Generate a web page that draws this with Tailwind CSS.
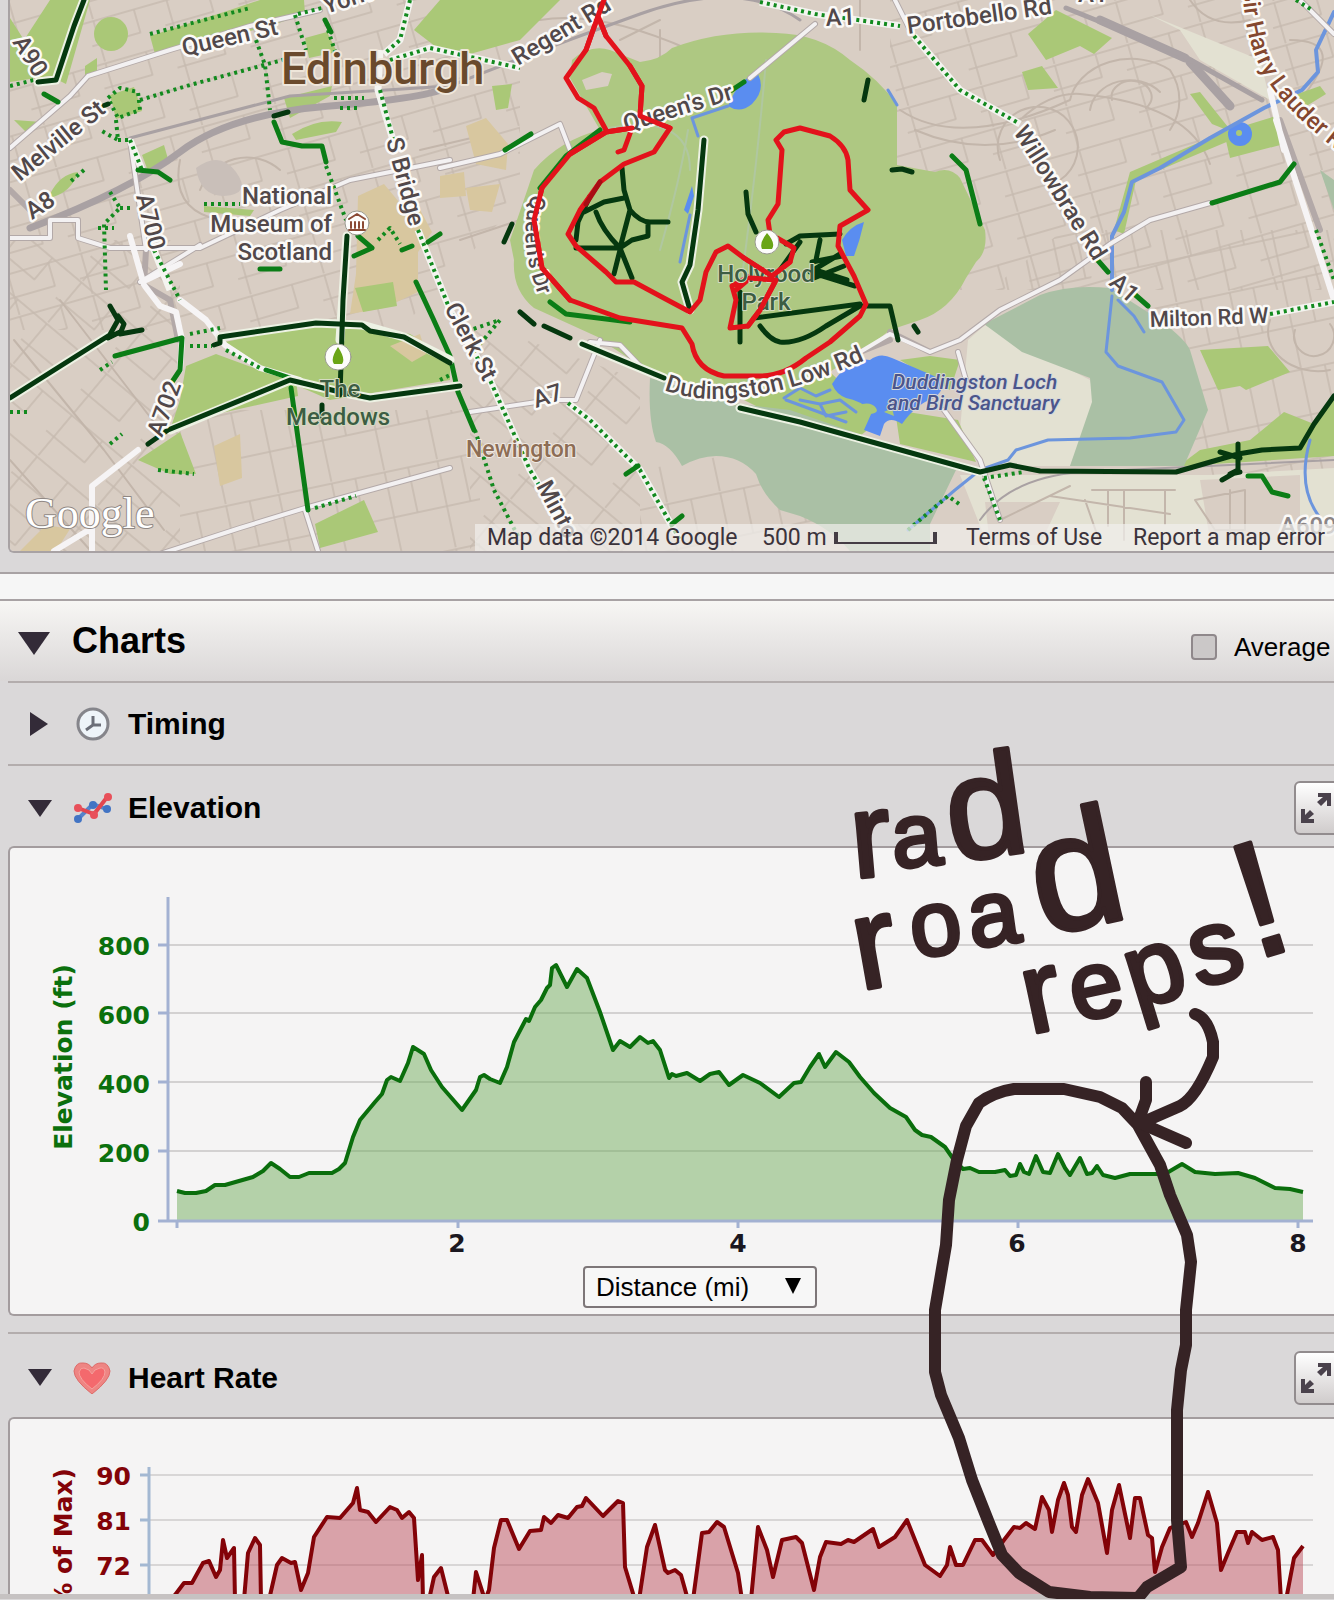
<!DOCTYPE html>
<html lang="en">
<head>
    <meta charset="UTF-8">
    <meta name="viewport" content="width=device-width, initial-scale=1.0">
    <title>Activity - Map and Charts</title>
    <script src="https://cdn.jsdelivr.net/npm/@tailwindcss/browser@4"></script>
</head>
<body class="bg-[#dad8d9] font-['Liberation_Sans',Arial,sans-serif] text-black">
<div class="relative overflow-hidden">

    <!-- Map -->
    <section class="border-b-2 border-[#a8a2a4] pl-2 pb-[19px]">
        <div class="relative overflow-hidden rounded-bl-md border-l-2 border-b-2 border-[#a8a2a4]">
            <svg class="block h-[551px] w-full bg-[#d9cec4]" viewBox="10 0 1324 551" preserveAspectRatio="xMinYMin slice" font-family="Roboto, sans-serif" font-weight="500" fill="none" stroke-linecap="round" stroke-linejoin="round">
                <defs>
                    <pattern id="streetsA" width="76" height="44" patternUnits="userSpaceOnUse" patternTransform="rotate(-16)">
                        <path d="M0 2H76M0 26H50M8 2V46M50 2V26" stroke="#c6baaf" stroke-width="1.5"/>
                    </pattern>
                    <pattern id="streetsB" width="78" height="54" patternUnits="userSpaceOnUse" patternTransform="rotate(40)">
                        <path d="M0 2H78M0 30H50M10 2V56M50 2V30" stroke="#c6baaf" stroke-width="1.5"/>
                    </pattern>
                    <pattern id="streetsC" width="54" height="90" patternUnits="userSpaceOnUse" patternTransform="rotate(-12)">
                        <path d="M0 2H54M8 2V92M32 2V48M0 48H54" stroke="#c6baaf" stroke-width="1.5"/>
                    </pattern>
                    <path id="queensWest" d="M532 194C520 230 524 264 548 320"/>
                    <path id="dudingston" d="M664 390C720 412 800 390 870 358"/>
                    <path id="lauder" d="M1242 -12C1248 60 1262 95 1350 160"/>
                </defs>

                <!-- minor streets -->
                <path fill="url(#streetsA)" d="M10 0H520V200L400 330H10ZM890 0H1334V290H960L890 160Z"/>
                <path fill="url(#streetsB)" d="M10 240H180V551H10ZM470 320 640 380 640 551H470Z"/>
                <path fill="url(#streetsC)" d="M180 410H480V551H180ZM1090 230H1334V500H1200ZM640 470 760 450 840 551H640ZM990 290 1100 200 1090 290Z"/>
                <path stroke="#c3b6ab" stroke-width="2" d="M1070 100a62 50 0 0 1 100 -30a70 60 0 0 1 0 60M1090 110a40 34 0 0 1 70 -18M1112 100a20 16 0 1 1 34 8M1020 120q30 -28 60 -26q110 10 130 70M900 110q60 40 170 -10M915 130q70 30 140 0M1000 160a40 40 0 1 1 60 20M540 20q60 -10 150 30q60 30 100 0M620 40l40 -20M660 30v70M860 0v50M1270 320a50 40 0 0 0 60 50M1295 330a20 20 0 1 0 35 -6M1190 0q20 30 60 20M1290 40q60 0 10 60M200 190a50 50 0 0 1 80 -20M180 160q-10 50 40 60M14 340l90 110 60 80M60 300l100 130M10 460l80 90M420 150l60 -14M460 240l60 -20"/>

                <!-- open country -->
                <path fill="#e3e1d2" d="M968 340 985 325 1090 380 1096 400 1070 466H985L960 430ZM960 475H1210L1334 468V551H990ZM1150 15 1260 60 1270 100 1200 60 1180 30Z"/>
                <path fill="#d9cec4" d="M985 502H1060L1040 545H990ZM1200 480 1300 475V540H1210Z"/>
                <path stroke="#c3b6ab" stroke-width="2" d="M1092 490H1175M1108 490v36M1124 490v50M1165 490v34M1050 496l120 18M1000 520l70 -34M1195 500l50 -10v40h-30ZM1230 490v50M1085 500l14 40"/>

                <!-- parks -->
                <g fill="#aac877">
                    <path d="M10 18 24 40 50 0H90L66 84 50 76 10 82Z"/>
                    <circle cx="111" cy="34" r="17"/>
                    <path d="M150 36 230 10 260 0H304L305 14 270 26 155 54ZM85 66l12 -8v14l-12 4ZM14 120l28 2 -14 12ZM305 38l22 -6 10 20 -28 6ZM110 95l24 -8 8 24 -26 8ZM284 98 332 86 330 96 290 118ZM292 134q24 -16 50 -12l-6 10 -40 8ZM50 194q10 -20 28 -22q-6 20 -28 26ZM142 155l22 -10 4 14 -20 12ZM204 206l50 4 -4 6 -46 -4Z"/>
                    <path d="M225 342 330 320 410 334 450 358V380L330 400 280 378ZM186 366 216 354 270 374 296 380 298 396 172 424 180 400ZM138 460 180 432 196 474 170 474ZM315 524 364 500 378 532 320 548Z"/>
                    <path d="M460 0H560L520 40 470 54 440 50ZM414 30 440 0H460L440 50ZM492 86l20 -2 -4 24 -12 2Z"/>
                    <path fill="#aec882" d="M572 60Q590 44 610 50L640 62Q660 60 672 48Q720 30 776 33Q820 34 850 60Q880 80 897 105V165L935 172Q950 166 960 178L985 230Q988 252 976 262L966 278Q950 310 920 320L890 330 862 352 800 390 720 400 650 372 610 346 600 338 534 308Q512 290 514 260L510 240Q524 200 534 170Q560 140 600 130L570 78Z"/>
                    <path d="M1028 34 1056 10 1112 38 1094 54 1080 46 1046 60ZM1022 72l20 -6 16 22 -30 2ZM1190 94l10 -2 32 40 -20 -8ZM1224 132 1276 116 1284 144 1230 158ZM1286 98 1320 86 1326 94 1300 110ZM1130 172 1228 130 1236 138 1136 180 1124 234 1114 230Z"/>
                    <path d="M1200 350 1268 346 1290 372 1246 390 1240 386 1218 390ZM1184 462 1200 450 1250 440 1284 412 1314 424 1334 400V456L1184 466ZM895 410 958 420 976 462 900 444ZM960 360 930 356 900 360 950 390ZM740 398 830 372 880 420 860 436 760 408Z"/>
                </g>
                <path fill="#d9cec4" d="M582 80l20 -8 10 2 -4 12 -22 4Z"/>
                <path fill="#d8c79f" d="M466 126l20 -8 22 26 -2 26 -30 -6ZM440 176l24 -4 2 24 -26 2ZM466 188l34 -4 -8 28 -22 -2ZM358 196l26 -12 20 24 14 -2 14 26 -14 20v40l-34 16 -34 6 6 -40ZM214 446l26 -12 2 44 -22 8ZM20 551l26 -26 24 4 -14 22ZM390 346l30 -12 6 20 -14 8Z"/>
                <path fill="#aac877" d="M355 288l38 -6 4 24 -34 6Z"/>

                <!-- golf courses -->
                <path fill="#aac0a5" d="M650 378 740 404 790 410 888 444 956 470 930 524V551H850Q830 528 800 516L780 510Q762 494 756 474Q740 456 716 456Q700 456 682 466Q670 444 656 442Q648 420 650 378ZM984 324 1040 295Q1070 284 1110 288L1160 320Q1186 340 1190 350L1208 410 1184 466H1070L1092 402 1090 378 1022 352ZM1320 170 1334 180V210Z"/>
                <path stroke="#b0c7a0" stroke-width="2" d="M660 250q20 -70 28 -120M766 60q-10 120 -30 260M600 130q90 -20 90 40"/>

                <!-- railways -->
                <g stroke="#a9a1a3">
                    <path stroke-width="7" d="M30 228Q130 190 180 152T330 106T450 86"/>
                    <path stroke-width="3" d="M130 138 290 96 450 86Q540 50 640 14T800 20"/>
                    <path stroke-width="9" d="M1100 20 1185 58M1190 62 1230 106"/>
                    <path stroke-width="5" d="M1066 8 1180 54 1262 100"/>
                    <path stroke-width="2" d="M980 520Q1010 478 1080 472L1334 460"/>
                </g>
                <path fill="#c9bfb9" d="M196 168q24 -18 40 4t-12 24q-24 0 -28 -28Z"/>

                <!-- water -->
                <g fill="#5a8df0">
                    <path d="M728 106Q740 76 758 74Q766 90 752 104Q740 114 728 106ZM842 240Q850 226 864 222Q860 240 854 256L846 256ZM684 210 692 186 694 196 688 214Z"/>
                    <path d="M832 384Q850 356 870 360Q880 352 892 358L934 376Q950 386 934 398Q916 404 902 424Q890 416 884 424L880 436 864 430 872 412Q860 400 846 398Q836 394 832 384Z"/>
                    <circle cx="1240" cy="134" r="12"/>
                </g>
                <path fill="#aac877" d="M862 404q10 -2 14 4t-10 6ZM884 412l8 -4 2 8Z"/>
                <g stroke="#6c95dd">
                    <path stroke-width="4" d="M1334 12 1316 50 1318 72 1302 90 1264 108 1210 138 1160 168 1132 182 1124 212 1112 236V290"/>
                    <path stroke-width="3" d="M1112 296 1106 352 1118 366 1162 382 1184 420 1176 432 1130 438 1048 440 1016 450 1008 460 980 470 955 490 908 530M1144 332 1134 316 1118 300M786 400l60 22M690 215 680 262M698 136 692 118 728 106M1310 440Q1296 490 1322 520M888 90 897 105"/>
                    <path stroke-width="3" d="M784 398 800 388 816 396 830 390M800 400 820 404 840 400 856 412M820 404 826 416 846 412"/>
                </g>
                <circle cx="1239" cy="133" r="3" fill="#aac877"/>

                <!-- main roads -->
                <path stroke="#b3a9a8" stroke-width="6" d="M70 96 88 76 170 50 250 26 320 10M70 96 10 148M130 140 146 250 144 285 170 300 178 340M10 238H50V220H78V238L110 248H200L280 210 350 180 450 160M140 282 200 245M440 168 500 154 560 124 570 150M815 24 750 78M890 332 930 352 960 340 1000 310 1060 280 1110 244 1150 220 1210 203M895 0 910 30M958 352 966 380M944 410 980 460 1000 520M1300 0 1334 34M1280 120 1320 230M600 340 576 400 550 400 470 412M640 366 620 345 590 342M860 352 890 340M10 190 30 210M160 554 240 528 305 508 450 468M305 510 318 551"/>
                <path stroke="#f3f1f2" stroke-width="4" d="M70 96 88 76 170 50 250 26 320 10M70 96 10 148M130 140 146 250M10 238H50V220H78V238L110 248H200L280 210 350 180 450 160M140 282 200 245M440 168 500 154 560 124 570 150M815 24 750 78M860 352 890 334 930 352 960 340 1000 310 1060 280 1110 244 1150 220 1210 203M895 0 910 30M958 352 966 380M944 410 980 460 1000 520M1300 0 1334 34M600 340 576 400 550 400 470 412M640 366 620 345 590 342M160 554 240 528 305 508 450 468M305 510 318 551"/>
                <path stroke="#f6f4f5" stroke-width="6" d="M130 236 144 285 160 306 176 312 182 340 180 370M146 280 180 264M180 300 206 320 225 345 260 368 300 380M138 450 92 486V551M92 528 54 551M1276 120 1334 300M1270 90 1284 150"/>

                <!-- activity heat traces, dotted -->
                <path stroke="#f4f4f0" stroke-width="7" stroke-linecap="butt" d="M380 50 378 90 396 150M410 0 400 40 384 54M390 60 430 48 520 68M418 230 450 310 490 380 530 470 560 520M568 403 590 420 640 470 680 540M760 2 815 14 900 26M914 36 960 90 1020 124M1270 314 1334 302M130 140 142 170M154 250 170 290"/>
                <g stroke="#128a1e" stroke-width="4" stroke-linecap="butt" stroke-dasharray="3 4">
                    <path d="M380 90 396 150M410 0 400 40 384 54M390 60 430 48 520 68M418 230 450 310 490 380 530 470 560 520M568 403 590 420 640 470 680 540M760 2 815 14 900 26M914 36 960 90 1020 124M1270 314 1334 302M130 140 142 170M154 250 180 300"/>
                    <path d="M150 34 250 8M256 40 265 65 270 110M295 15 306 50M298 14 322 8M328 30 336 54M140 100 190 85 290 58M108 98 120 88 138 92 140 110 118 118ZM116 120 118 140 100 130M118 140H132M326 166 346 220M110 192 120 208 104 224 106 290M120 208H132M98 228h16M204 204H240M10 86 34 80M334 98h30M340 108h20M378 240l12 -12 10 16M475 430 494 490 520 540M480 344 500 320 470 330M158 470 194 474M315 508 356 496M190 334 220 328M190 346h22M100 370l12 -8M110 444l12 -10M10 412h20M84 170l-14 12M984 478 1000 520M984 478l40 -6M908 530l40 -34 14 10M226 350 260 368M440 380l12 -6M1316 230 1334 280M1296 0l16 10"/>
                </g>

                <!-- activity heat traces, solid -->
                <path stroke="#0b7d16" stroke-width="5" d="M44 94l14 8M274 122l8 20 20 4 20 0 4 16M138 170l20 2 12 8M260 269h20M358 236l14 12 -18 8M115 356 182 338 180 370 172 382M266 370 290 378M291 388 308 510M416 282Q434 320 450 356L458 392 474 430M402 250l10 -4M428 242l12 -8M505 150l26 -16M540 188 566 156 600 130M550 302 566 314 630 322M626 474l12 -8M672 524l10 -8M732 90l12 -8M325 20l6 12M952 156 966 170 980 224M1094 256l14 16M1132 292l16 14M1212 203 1280 182 1294 164M1248 476l14 0 10 16 16 4"/>
                <path stroke="#edf2e4" stroke-width="9" d="M84 0 74 26 56 80 38 82M10 398 108 336M220 337 316 323 362 325 404 337 450 360M170 430 290 380 340 392 370 398 458 386M347 236 340 340M582 344 664 378M740 408 800 422 980 472M704 140 698 210 690 265 682 282 690 310"/>
                <g stroke="#05380f" stroke-width="5">
                    <path d="M84 0 74 26 56 80 38 82M98 108l10 -4M274 116l14 -4M347 236 343 300 340 395M10 398 108 336M110 306 118 320 108 338M118 316l6 8 -4 10 22 -4M120 332l-12 6"/>
                    <path d="M214 345l6 -2 0 -6 96 -14 46 2 8 6 34 6 46 26M148 444 168 430 290 380 340 392 370 398 460 386M322 405v14"/>
                    <path d="M504 242l8 -18M520 312l14 12M544 326l26 12M582 344 664 378M740 408 800 422 980 472 1010 465 1040 471 1176 472 1238 454 1262 450 1300 448 1314 424 1334 396M1238 444V470l-8 4 10 -2M1220 452l20 6M1222 480l14 -8"/>
                    <path d="M704 140 698 210 690 265 682 282 690 310M622 168 624 190 630 210Q640 222 650 222H668M584 212 604 202 624 198M596 212Q602 230 620 248M630 210 620 248M576 248H620L632 240 648 236 648 222M620 248 632 278M620 250 614 274M576 240 578 222 590 196M746 192 748 214 756 232M868 80l-4 20M892 170l10 -1 10 3"/>
                    <path d="M786 244 800 236 840 234M800 242 780 270M820 240l-4 20M840 254 810 272 855 286M815 270l32 10M812 262l30 -6M814 278l30 -12M740 292v50M760 326Q770 340 780 342Q800 344 826 326L860 306 890 306 898 340M754 318 860 304M914 326l4 6"/>
                </g>

                <!-- recorded route -->
                <path stroke="#e3121b" stroke-width="5" d="M604 0 598 16 606 36 630 66 642 86 640 116 670 128 654 152 624 164 600 182 580 210 568 234 576 246 606 272 616 282 634 282 660 296 690 312 700 300 706 272 716 252 728 246 744 258 772 276 790 262 794 248 784 242 770 234 768 220 778 204 782 150 776 140 784 132 800 128 830 136Q846 146 848 160L850 190 868 210 840 226 838 246 854 276 866 304 860 316 830 342 806 358Q784 376 760 376H724Q696 370 692 344L682 328 620 318 570 300 542 268 534 220 542 188 570 154 606 132 632 128 624 150 618 152M598 16 586 50 566 78 578 98 594 108 606 130M736 290 750 278 776 280 760 310 748 326 730 328 736 300 732 286 750 276"/>
                <path stroke="#a80d14" stroke-width="5" d="M600 182 586 204"/>

                <!-- pins -->
                <g fill="#fdfdfb" stroke="#9a9a90">
                    <circle cx="338" cy="357" r="13"/>
                    <circle cx="767" cy="242" r="12"/>
                    <circle cx="357" cy="223" r="12"/>
                </g>
                <path fill="#6aa516" d="M338 347q-8 12 -4 17h8q4 -5 -4 -17ZM767 233q-8 10 -5 16h10q4 -6 -5 -16Z"/>
                <path stroke="#8a4a35" stroke-width="2" d="M349 219l8 -5 8 5M351 222v6M355 222v6M359 222v6M363 222v6M349 230h16"/>

                <!-- labels -->
                <g font-size="24" fill="#51484a" stroke="#fbfaf8" stroke-width="5" paint-order="stroke">
                    <text transform="translate(184 56) rotate(-13)">Queen St</text>
                    <text transform="translate(326 14) rotate(-18)">York Pl</text>
                    <text transform="translate(12 42) rotate(58)">A90</text>
                    <text transform="translate(20 182) rotate(-39)">Melville St</text>
                    <text transform="translate(32 220) rotate(-33)">A8</text>
                    <text transform="translate(136 196) rotate(76)">A700</text>
                    <text transform="translate(386 140) rotate(75)">S Bridge</text>
                    <text transform="translate(518 66) rotate(-31)">Regent Rd</text>
                    <text transform="translate(826 26) rotate(-3)">A1</text>
                    <text transform="translate(908 34) rotate(-8)">Portobello Rd</text>
                    <text transform="translate(1078 2)">A1</text>
                    <text transform="translate(1013 132) rotate(58)">Willowbrae Rd</text>
                    <text transform="translate(1108 284) rotate(42)">A1</text>
                    <text transform="translate(1150 327) rotate(-2)" font-size="22">Milton Rd W</text>
                    <text transform="translate(162 438) rotate(-70)">A702</text>
                    <text transform="translate(444 308) rotate(62)">Clerk St</text>
                    <text transform="translate(536 408) rotate(-18)">A7</text>
                    <text transform="translate(536 486) rotate(62)">Minto</text>
                    <text transform="translate(626 132) rotate(-17)">Queen's Dr</text>
                    <text font-size="22"><textPath href="#queensWest">Queen's Dr</textPath></text>
                    <text><textPath href="#dudingston">Dudingston Low Rd</textPath></text>
                    <text x="1280" y="534" fill="#8b8587">A6095</text>
                    <text fill="#84472f"><textPath href="#lauder">Sir Harry Lauder Rd</textPath></text>
                    <g text-anchor="end">
                        <text x="332" y="204">National</text>
                        <text x="332" y="232">Museum of</text>
                        <text x="332" y="260">Scotland</text>
                    </g>
                </g>
                <path stroke="#e3121b" stroke-width="5" d="M604 0 598 16 606 36M598 16 586 50M630 66 642 86 640 116 670 128M542 188 534 220 542 268 570 300M570 154 606 132 632 128"/>
                <g font-size="24" stroke-width="2" paint-order="stroke">
                    <g fill="#3c5d43" stroke="#d5dcc0" text-anchor="middle">
                        <text x="340" y="397">The</text>
                        <text x="338" y="425">Meadows</text>
                        <text x="766" y="282">Holyrood</text>
                        <text x="766" y="310">Park</text>
                    </g>
                    <text x="466" y="457" font-size="23" fill="#8d6d55" stroke="#efe9e2">Newington</text>
                    <g font-size="21" font-style="italic" fill="#4b558b" stroke="#d5d8dc">
                        <text x="892" y="389">Duddingston Loch</text>
                        <text x="887" y="410">and Bird Sanctuary</text>
                    </g>
                    <text x="281" y="84" font-size="45" fill="#6a4a2c" stroke="#efe6da" stroke-width="4">Edinburgh</text>
                </g>
                <path stroke="#e3121b" stroke-width="5" d="M744 258 772 276 790 262M750 278 776 280 760 310 748 326"/>
                <text x="25" y="528" font-family="Liberation Serif, serif" font-size="44" font-weight="400" fill="#fff" stroke="#8f8783" stroke-width="2" paint-order="stroke">Google</text>
            </svg>

            <div class="absolute right-0 bottom-0 flex h-[27px] w-[859px] items-center bg-[#f1efec]/70 pl-3 font-[Roboto,sans-serif] text-[23px] leading-6 whitespace-nowrap text-[#3b333b]">
                <span class="w-[275px]">Map data ©2014 Google</span>
                <span class="w-[72px]">500 m</span>
                <span class="h-3 w-[103px] border-x-4 border-b-2 border-[#453d45]"></span>
                <a href="#" class="ml-[29px] w-[167px]">Terms of Use</a>
                <a href="#">Report a map error</a>
            </div>
        </div>
    </section>

    <div class="h-[25px] border-b-2 border-[#a8a2a4] bg-[#f6f6f6] box-content"></div>

    <!-- Charts header -->
    <section>
        <header class="flex h-20 items-center bg-linear-to-b from-[#f7f6f4] to-[#dad7d7] pl-[18px]">
            <svg class="mt-1 h-6 w-8" viewBox="0 0 32 24"><path fill="#332b38" d="M0 1h32L16 24Z"/></svg>
            <h2 class="ml-[22px] text-4xl font-bold">Charts</h2>
            <label class="ml-auto flex w-[143px] items-center pt-3 text-[26px] leading-8 whitespace-nowrap">
                <input type="checkbox" class="mr-[17px] size-[26px] shrink-0 appearance-none rounded-sm border-2 border-[#8f888b] bg-[#cbc8c8]">
                Average
            </label>
        </header>

        <div class="ml-2">
            <div class="flex h-[83px] items-center border-t-2 border-[#b3adad] pl-[22px]">
                <svg class="h-6 w-[18px]" viewBox="0 0 18 24"><path fill="#332b38" d="M0 0 18 12 0 24Z"/></svg>
                <svg class="ml-[28px] size-[34px]" viewBox="0 0 34 34">
                    <circle cx="17" cy="17" r="15" fill="#eef4f9" stroke="#85858b" stroke-width="3"/>
                    <path d="M17 9v9l-7 5M17 18h8" fill="none" stroke="#6b6e78" stroke-width="3"/>
                </svg>
                <h3 class="ml-[18px] text-3xl font-bold">Timing</h3>
            </div>

            <div class="flex h-[82px] items-center border-t-2 border-[#b3adad] pt-1 pl-5">
                <svg class="h-[17px] w-6" viewBox="0 0 24 17"><path fill="#332b38" d="M0 0h24L12 17Z"/></svg>
                <svg class="ml-[20px] h-8 w-10" viewBox="0 0 40 32">
                    <path d="M6 27 21 12 34 17" fill="none" stroke="#5684cb" stroke-width="4"/>
                    <path d="M6 16 22 22 36 4" fill="none" stroke="#e2464f" stroke-width="4"/>
                    <g fill="#4274c4"><circle cx="6" cy="27" r="4"/><circle cx="21" cy="13" r="4"/><circle cx="35" cy="17" r="4"/></g>
                    <g fill="#e8505a"><circle cx="6" cy="16" r="4"/><circle cx="22" cy="23" r="4"/><circle cx="36" cy="5" r="4"/></g>
                </svg>
                <h3 class="ml-4 text-3xl font-bold">Elevation</h3>
                <button class="-mr-4 ml-auto h-[54px] w-14 rounded-md border-2 border-[#928c8e] bg-linear-to-b from-white to-[#d0cccc] pl-1" aria-label="Expand elevation chart">
                    <svg class="h-8 w-8" viewBox="0 0 32 32"><path fill="#4a424c" d="M18 1H31V14H27V8L21 14 17 10 23 5H18ZM1 17H5V23L10 18 14 22 8 27H14V31H1Z"/></svg>
                </button>
            </div>

            <!-- Elevation panel -->
            <div class="rounded-l-md border-2 border-r-0 border-[#a39c9e] bg-[#f5f4f4] pb-[6px]">
                <svg class="block h-[418px] w-full" viewBox="10 848 1324 418" preserveAspectRatio="xMinYMin slice" font-family="DejaVu Sans, Verdana, sans-serif" font-weight="700" font-size="25">
                    <path d="M168 945H1313M168 1013H1313M168 1082H1313M168 1151H1313" stroke="#d3d1d1" stroke-width="2"/>
                    <polygon id="elevationArea" fill="#6dab57" fill-opacity=".48"/>
                    <polyline id="elevationLine" fill="none" stroke="#0a6e0c" stroke-width="4" stroke-linejoin="round" points="177 1191 185 1193 196 1193 206 1191 215 1185 225 1185 253 1177 263 1171 271 1163 280 1169 290 1177 299 1177 309 1173 332 1173 339 1169 345 1163 353 1137 360 1120 375 1102 382 1094 387 1080 391 1077 400 1081 408 1063 413 1047 424 1054 431 1070 442 1087 462 1110 476 1090 480 1077 484 1075 490 1079 500 1083 507 1067 514 1042 526 1019 529 1021 535 1007 541 1000 547 988 550 985 552 968 556 965 567 987 577 969 587 978 600 1012 613 1050 620 1041 630 1047 640 1037 648 1043 653 1041 660 1050 669 1078 672 1074 676 1076 687 1073 700 1081 710 1074 719 1072 729 1085 743 1075 760 1083 779 1097 794 1083 801 1082 810 1067 819 1054 825 1067 836 1052 849 1062 860 1077 874 1093 890 1108 906 1117 915 1130 922 1135 931 1137 945 1147 954 1160 963 1169 970 1168 979 1172 995 1172 1005 1170 1010 1176 1016 1175 1020 1164 1024 1172 1029 1174 1036 1156 1043 1172 1050 1173 1058 1154 1065 1168 1070 1175 1080 1158 1087 1174 1092 1173 1097 1166 1103 1175 1115 1178 1130 1174 1165 1174 1182 1164 1195 1172 1215 1174 1238 1173 1255 1178 1275 1188 1290 1189 1303 1192"/>
                    <path d="M168 897V1221M158 945H168M158 1013H168M158 1082H168M158 1151H168M158 1221H1313M177 1221V1228M458 1221V1228M738 1221V1228M1018 1221V1228M1298 1221V1228" stroke="#a3b1d2" stroke-width="3"/>
                    <g fill="#0b700d" text-anchor="end">
                        <text x="150" y="955">800</text>
                        <text x="150" y="1024">600</text>
                        <text x="150" y="1093">400</text>
                        <text x="150" y="1162">200</text>
                        <text x="150" y="1231">0</text>
                    </g>
                    <g fill="#1b1720" text-anchor="middle">
                        <text x="457" y="1252">2</text>
                        <text x="738" y="1252">4</text>
                        <text x="1017" y="1252">6</text>
                        <text x="1298" y="1252">8</text>
                    </g>
                    <text transform="translate(72 1057) rotate(-90)" text-anchor="middle" fill="#0b700d">Elevation (ft)</text>
                </svg>
                <div class="flex justify-center pl-14">
                    <div class="relative">
                        <select aria-label="Chart axis" class="block h-[42px] w-[234px] appearance-none rounded-sm border-2 border-[#7d7678] bg-[#f7f7f7] pl-[11px] text-[26px] leading-8">
                            <option>Distance (mi)</option>
                            <option>Time</option>
                        </select>
                        <svg class="pointer-events-none absolute top-3 right-4 h-4 w-4" viewBox="0 0 16 16"><path d="M0 0h16L8 16Z"/></svg>
                    </div>
                </div>
            </div>

            <div class="mt-4 flex h-[85px] items-center border-t-2 border-[#b3adad] pt-1 pl-5">
                <svg class="h-[17px] w-6" viewBox="0 0 24 17"><path fill="#332b38" d="M0 0h24L12 17Z"/></svg>
                <svg class="ml-[20px] h-8 w-10" viewBox="0 0 40 32">
                    <path d="M20 32Q2 18 2 9Q4 0 11 1Q17 1 20 6Q23 1 29 1Q36 0 38 9Q38 18 20 32Z" fill="#ee8583" stroke="#dd6b69"/>
                    <path d="M20 27Q7 17 7 10Q9 5 12 6Q18 7 20 12Q22 7 28 6Q32 5 33 10Q33 17 20 27Z" fill="#f4696d" stroke="#f5a29e"/>
                </svg>
                <h3 class="ml-4 text-3xl font-bold">Heart Rate</h3>
                <button class="-mr-4 ml-auto h-[54px] w-14 rounded-md border-2 border-[#928c8e] bg-linear-to-b from-white to-[#d0cccc] pl-1" aria-label="Expand heart rate chart">
                    <svg class="h-8 w-8" viewBox="0 0 32 32"><path fill="#4a424c" d="M18 1H31V14H27V8L21 14 17 10 23 5H18ZM1 17H5V23L10 18 14 22 8 27H14V31H1Z"/></svg>
                </button>
            </div>

            <!-- Heart rate panel -->
            <div class="rounded-tl-md border-t-2 border-l-2 border-[#a39c9e] bg-[#f5f4f4]">
                <svg class="block h-[175px] w-full" viewBox="10 1419 1324 175" preserveAspectRatio="xMinYMin slice" font-family="DejaVu Sans, Verdana, sans-serif" font-weight="700" font-size="25">
                    <path d="M149 1475H1313M149 1520H1313M149 1565H1313" stroke="#d8d6d6" stroke-width="2"/>
                    <path fill="#b94a58" fill-opacity=".48" stroke="#830308" stroke-width="4" stroke-linejoin="round" d="M168 1600 175 1595 184 1583 192 1583 203 1563 209 1561 216 1577 220 1570 223 1540 227 1558 234 1548 235 1600M244 1600 248 1553 255 1538 260 1545 261 1600M269 1600 277 1565 282 1558 291 1563 295 1562 301 1590 308 1573 314 1537 327 1517 340 1518 353 1503 357 1488 360 1510 368 1512 376 1522 390 1507 397 1510 402 1518 409 1512 414 1518 418 1580 422 1555 423 1600M429 1600 434 1577 441 1568 449 1600M473 1600 476 1572 485 1600 489 1590 494 1548 501 1520 507 1520 519 1549 530 1531 541 1530 544 1517 551 1523 558 1515 568 1518 577 1507 582 1506 586 1498 603 1516 618 1501 623 1503 625 1567 635 1600M639 1600 647 1547 655 1525 665 1570 668 1573 675 1570 681 1575 688 1600M693 1600 702 1533 709 1532 717 1522 724 1527 738 1573 742 1600M751 1600 758 1527 767 1550 773 1577 782 1540 796 1537 802 1543 814 1590 820 1557 826 1542 841 1544 848 1540 854 1542 873 1529 879 1547 895 1537 907 1520 925 1565 940 1576 947 1565 950 1547 956 1565 963 1565 975 1540 982 1540 993 1555 1004 1540 1014 1527 1020 1528 1026 1523 1035 1529 1042 1497 1049 1510 1052 1532 1058 1500 1064 1483 1068 1495 1072 1527 1076 1532 1082 1495 1088 1479 1098 1503 1107 1553 1112 1510 1119 1485 1130 1538 1135 1498 1140 1498 1148 1535 1152 1538 1155 1572 1162 1547 1170 1528 1186 1522 1192 1537 1198 1523 1208 1492 1217 1523 1221 1570 1228 1553 1237 1532 1245 1532 1248 1543 1252 1532 1262 1540 1273 1537 1278 1550 1281 1600"/>
                    <path fill="#b94a58" fill-opacity=".48" d="M1286 1600 1294 1558 1303 1546V1600Z"/>
                    <path fill="none" stroke="#830308" stroke-width="4" stroke-linejoin="round" d="M1286 1600 1294 1558 1303 1546"/>
                    <path d="M149 1467V1600M140 1475H149M140 1520H149M140 1565H149" stroke="#a3b8d2" stroke-width="3"/>
                    <g fill="#830308" text-anchor="end">
                        <text x="131" y="1485">90</text>
                        <text x="131" y="1530">81</text>
                        <text x="131" y="1575">72</text>
                    </g>
                    <text transform="translate(72 1468) rotate(-90)" text-anchor="end" fill="#830308">Heart Rate (% of Max)</text>
                </svg>
            </div>
        </div>
        <div class="h-[5px] bg-[#c6c2c2]"></div>
    </section>

    <!-- Hand-drawn note over the charts -->
    <svg class="pointer-events-none absolute top-0 left-0 h-[1600px] w-full" viewBox="0 0 1334 1600" preserveAspectRatio="xMinYMin slice" fill="none" stroke="#362325" stroke-width="12" stroke-linecap="round" stroke-linejoin="round">
        <path d="M1138 1125 1122 1108 1100 1097 1064 1089H1014Q994 1092 979 1103L966 1126 957 1160 949 1200 946 1245 935 1310V1372L941 1395 959 1438 972 1480 989 1523 1002 1555 1019 1573 1049 1592 1090 1597 1138 1598 1147 1587 1181 1567 1177 1520V1410L1181 1370 1186 1345V1310L1191 1262 1187 1235 1170 1195 1160 1165 1138 1125"/>
        <path d="M1195 1014Q1208 1018 1213 1042V1057Q1196 1098 1180 1106L1148 1120M1146 1082V1100L1138 1122 1186 1143"/>
        <g fill="#362325" stroke-width="4" font-family="Liberation Sans, sans-serif">
            <text><tspan x="854" y="878" font-size="120" rotate="-5">r</tspan><tspan x="894" y="868" font-size="90" rotate="-5">a</tspan><tspan x="952" y="862" font-size="145" rotate="-8">d</tspan></text>
            <text><tspan x="860" y="990" font-size="130" rotate="-10">r</tspan><tspan x="914" y="958" font-size="92" rotate="-8">o</tspan><tspan x="972" y="948" font-size="92" rotate="-8">a</tspan><tspan x="1042" y="936" font-size="165" rotate="-12">d</tspan></text>
            <text><tspan x="1030" y="1034" font-size="115" rotate="-12">r</tspan><tspan x="1076" y="1022" font-size="95" rotate="-12">e</tspan><tspan x="1136" y="1010" font-size="105" rotate="-17">p</tspan><tspan x="1198" y="988" font-size="105" rotate="-15">s</tspan><tspan x="1254" y="960" font-size="165" rotate="-17">!</tspan></text>
        </g>
    </svg>
</div>

<script>
    // close the elevation line down to the axis to get the shaded area
    const line = document.getElementById('elevationLine');
    const area = document.getElementById('elevationArea');
    area.setAttribute('points', `${line.getAttribute('points')} 1303 1220 177 1220`);
</script>
</body>
</html>
